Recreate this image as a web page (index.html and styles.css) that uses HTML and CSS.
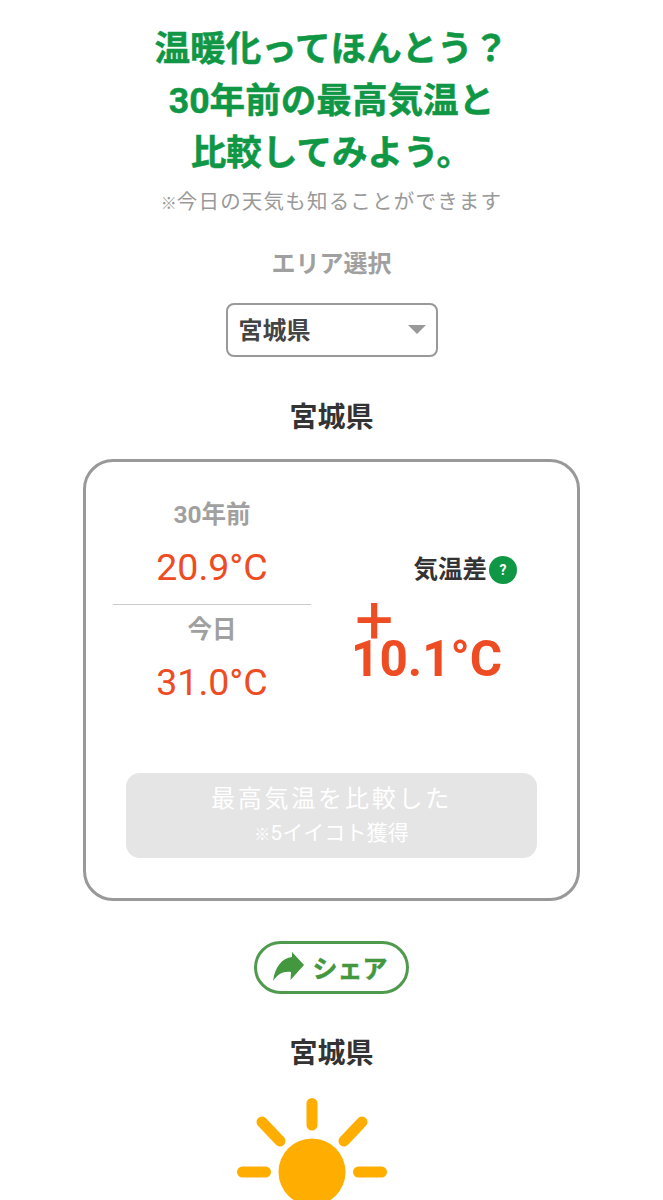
FILE: index.html
```html
<!DOCTYPE html>
<html lang="ja">
<head>
  <meta charset="UTF-8" />
  <meta name="viewport" content="width=device-width, initial-scale=1.0"/>
  <title>最高気温比較</title>
  <link rel="stylesheet" href="styles.css">
</head>
<body>
  <div class="page">
    <h1 class="title">温暖化ってほんとう？<br>30年前の最高気温と<br>比較してみよう。</h1>
    <p class="note"><span class="kome">※</span>今日の天気も知ることができます</p>
    <p class="area-label">エリア選択</p>
    <div class="select">
      <span>宮城県</span>
      <span class="select-arrow"></span>
    </div>
    <h2 class="pref">宮城県</h2>

    <div class="card">
      <div class="compare">
        <div class="temps">
          <div class="temp-block">
            <div class="temp-label">30年前</div>
            <div class="temp-value">20.9°C</div>
          </div>
          <div class="temp-block today">
            <div class="temp-label">今日</div>
            <div class="temp-value">31.0°C</div>
          </div>
        </div>
        <div class="diff">
          <div class="diff-head">
            <span>気温差</span>
            <span class="help">?</span>
          </div>
          <div class="diff-sign">+</div>
          <div class="diff-value">10.1°C</div>
        </div>
      </div>
      <div class="done-btn">
        <div class="done-main">最高気温を比較した</div>
        <div class="done-sub"><span class="kome">※</span>5イイコト獲得</div>
      </div>
    </div>

    <div class="share">
      <svg class="share-icon" viewBox="0 0 34 32" width="34" height="32">
        <path d="M1 30 C3 16 10 7 20 6 L20 1 L32 14 L18.5 29 L19 21 C11 20 6 23 1 30 Z" fill="#43973f"/>
      </svg>
      <span>シェア</span>
    </div>

    <h2 class="pref second">宮城県</h2>

    <svg class="sun" viewBox="0 0 150 102" width="150" height="102">
      <g stroke="#ffae00" stroke-width="11" stroke-linecap="round">
        <line x1="75" y1="5.5" x2="75" y2="27"/>
        <line x1="25" y1="24" x2="43" y2="43"/>
        <line x1="125" y1="24" x2="107" y2="43"/>
        <line x1="5.5" y1="74" x2="28.5" y2="74"/>
        <line x1="121.5" y1="74" x2="144.5" y2="74"/>
      </g>
      <circle cx="75" cy="74" r="33.5" fill="#ffae00"/>
    </svg>
  </div>
</body>
</html>
```

FILE: styles.css
```css
body {
  margin: 0;
  background: #fff;
  font-family: Roboto, "Noto Sans CJK JP", sans-serif;
  color: #333;
}
.page {
  height: 1200px;
  overflow: hidden;
  display: flex;
  flex-direction: column;
  align-items: center;
}
.page > * {
  flex: none;
}
.title {
  margin: 23px 0 0;
  font-size: 35.6px;
  line-height: 52.2px;
  font-weight: 700;
  color: #0f9745;
  text-align: center;
  -webkit-text-stroke: 0.5px #0f9745;
}
.note {
  margin: 7px 0 0;
  font-size: 20.5px;
  line-height: 30px;
  color: #999;
  letter-spacing: 1.2px;
}
.kome {
  font-size: 16px;
  letter-spacing: 0;
}
.area-label {
  margin: 29px 0 0;
  font-size: 24px;
  line-height: 32px;
  font-weight: 700;
  color: #a0a0a0;
}
.select {
  margin-top: 23px;
  box-sizing: border-box;
  width: 212px;
  height: 54px;
  padding: 0 10px 3px 11px;
  border: 2px solid #999;
  border-radius: 8px;
  display: flex;
  align-items: center;
  justify-content: space-between;
  font-size: 24px;
  font-weight: 700;
  color: #444;
}
.select-arrow {
  width: 0;
  height: 0;
  margin-top: 3px;
  border-left: 9px solid transparent;
  border-right: 9px solid transparent;
  border-top: 9px solid #999;
}
.pref {
  margin: 43px 0 0;
  font-size: 28px;
  line-height: 36px;
  font-weight: 700;
  color: #333;
}
.card {
  margin-top: 23px;
  box-sizing: border-box;
  width: 497px;
  height: 442px;
  border: 3px solid #999;
  border-radius: 30px;
  padding: 37px 40px 0;
}
.compare {
  display: flex;
  height: 274px;
}
.temps {
  width: 198px;
  margin-left: -13px;
}
.temp-block {
  text-align: center;
  height: 105px;
}
.temp-block.today {
  border-top: 1px solid #ccc;
  padding-top: 9px;
}
.temp-label {
  font-size: 24.5px;
  line-height: 32px;
  font-weight: 700;
  color: #a0a0a0;
}
.temp-value {
  margin-top: 14px;
  font-size: 37.5px;
  line-height: 44px;
  color: #ee4c22;
}
.diff {
  margin-left: 40px;
  width: 150px;
  padding-top: 55px;
}
.diff-head {
  display: flex;
  align-items: center;
  justify-content: flex-end;
  gap: 2px;
  margin-right: -16px;
  font-size: 24.5px;
  line-height: 32px;
  font-weight: 700;
  color: #333;
}
.help {
  width: 28px;
  height: 28px;
  border-radius: 50%;
  background: #0f9745;
  color: #fff;
  font-size: 14px;
  font-weight: 700;
  line-height: 28px;
  text-align: center;
}
.diff-sign {
  margin-top: 14px;
  padding-left: 4px;
  height: 34px;
  font-size: 68px;
  line-height: 40px;
  font-weight: 400;
  color: #ee4c22;
}
.diff-value {
  font-size: 49.5px;
  line-height: 50px;
  font-weight: 700;
  color: #ee4c22;
}
.done-btn {
  box-sizing: border-box;
  width: 411px;
  height: 85px;
  background: #e5e5e5;
  border-radius: 14px;
  text-align: center;
  color: #fff;
  padding-top: 9px;
}
.done-main {
  font-size: 24px;
  line-height: 34px;
  letter-spacing: 2.8px;
}
.done-sub {
  font-size: 21px;
  line-height: 34px;
  letter-spacing: 0.1px;
}
.share {
  margin-top: 40px;
  box-sizing: border-box;
  width: 155px;
  height: 53px;
  padding-right: 3px;
  border: 3px solid #4f9a4c;
  border-radius: 27px;
  display: flex;
  align-items: center;
  justify-content: center;
  gap: 6px;
  font-size: 25px;
  font-weight: 700;
  color: #43973f;
  -webkit-text-stroke: 0.5px #43973f;
}
.pref.second {
  margin-top: 42px;
}
.sun {
  display: block;
  margin: 26px 39px 0 0;
}
```
